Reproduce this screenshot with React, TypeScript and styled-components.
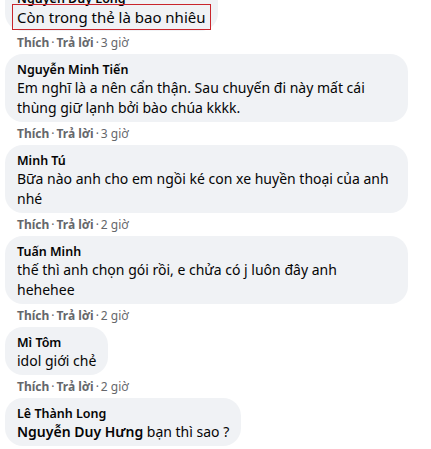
import React from 'react';
import styled, { createGlobalStyle } from 'styled-components';

type Comment = {
	author: string;
	text: string;
	mention?: string;
	time: string;
	marked?: boolean;
};

const comments: Comment[] = [
	{ author: 'Nguyễn Duy Long', text: 'Còn trong thẻ là bao nhiêu', time: '3 giờ', marked: true },
	{
		author: 'Nguyễn Minh Tiến',
		text: 'Em nghĩ là a nên cẩn thận. Sau chuyến đi này mất cái thùng giữ lạnh bởi bào chúa kkkk.',
		time: '3 giờ',
	},
	{
		author: 'Minh Tú',
		text: 'Bữa nào anh cho em ngồi ké con xe huyền thoại của anh nhé',
		time: '2 giờ',
	},
	{
		author: 'Tuấn Minh',
		text: 'thế thì anh chọn gói rồi, e chửa có j luôn đây anh hehehee',
		time: '2 giờ',
	},
	{ author: 'Mì Tôm', text: 'idol giới chẻ', time: '2 giờ' },
	{ author: 'Lê Thành Long', mention: 'Nguyễn Duy Hưng', text: ' bạn thì sao ?', time: '2 giờ' },
];

export default function App() {
	return (
		<>
			<GlobalStyle />
			<Thread>
				{comments.map((c, i) => (
					<CommentItem key={i}>
						<Bubble>
							<Author>{c.author}</Author>
							<Body $large={c.marked}>
								{c.marked ? (
									<Marked>{c.text}</Marked>
								) : (
									<>
										{c.mention && <Mention>{c.mention}</Mention>}
										{c.text}
									</>
								)}
							</Body>
						</Bubble>
						{i < comments.length - 1 && (
							<Actions>
								<b>Thích</b>
								<Dot>·</Dot>
								<b>Trả lời</b>
								<Dot>·</Dot>
								<span>{c.time}</span>
							</Actions>
						)}
					</CommentItem>
				))}
			</Thread>
		</>
	);
}

const GlobalStyle = createGlobalStyle`
	html, body {
		margin: 0;
		background: #ffffff;
		overflow: hidden;
	}
	body {
		font-family: "Segoe UI", "Noto Sans", sans-serif;
		color: #050505;
	}
`;

const Thread = styled.div`
	display: flex;
	flex-direction: column;
	margin-top: -17px;
	padding-left: 5px;
	width: 403px;
`;

const CommentItem = styled.div`
	display: flex;
	flex-direction: column;
	align-items: flex-start;
`;

const Bubble = styled.div`
	background: #f0f2f5;
	border-radius: 18px;
	padding: 8px 12px 4px 12px;
	max-width: 379px;
`;

const Author = styled.div`
	font-size: 12.5px;
	font-weight: 600;
	line-height: 16px;
	color: #050505;
`;

const Body = styled.div<{ $large?: boolean }>`
	font-size: ${(p) => (p.$large ? '15px' : '14px')};
	line-height: 20px;
	color: #050505;
`;

const Marked = styled.span`
	display: inline-block;
	border: 1px solid #c9252c;
	padding: 2px 4px;
	margin: -3px -5px;
`;

const Mention = styled.span`
	font-weight: 600;
`;

const Actions = styled.div`
	display: flex;
	align-items: center;
	padding: 4px 0 3px 12px;
	font-size: 12px;
	line-height: 16px;
	color: #65676b;

	b {
		font-weight: 700;
	}
`;

const Dot = styled.span`
	margin: 0 2px;
`;
